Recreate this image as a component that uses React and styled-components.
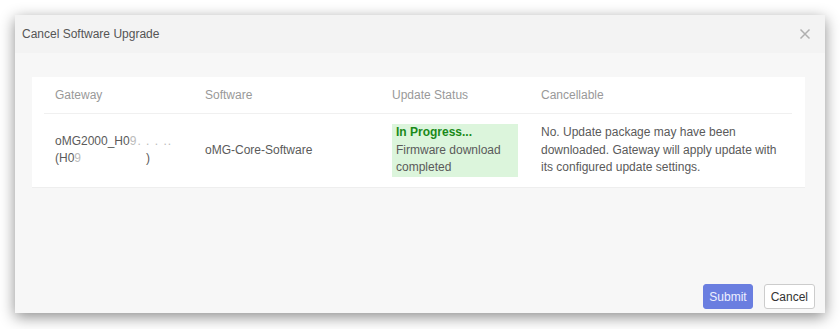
import React from 'react'
import styled, { createGlobalStyle } from 'styled-components'

const GlobalStyle = createGlobalStyle`
  body {
    margin: 0;
    background: #ffffff;
    font-family: "Liberation Sans", Arial, sans-serif;
  }
`

const Page = styled.div`
  padding: 15px;
  width: 840px;
  height: 329px;
  box-sizing: border-box;
`

const Modal = styled.div`
  width: 810px;
  height: 298px;
  background: #f7f7f7;
  box-shadow: 0 4px 14px rgba(0, 0, 0, 0.45);
  display: flex;
  flex-direction: column;
`

const Header = styled.div`
  height: 38px;
  background: #f3f3f3;
  display: flex;
  align-items: center;
  justify-content: space-between;
  padding: 0 14px 0 7px;
`

const Title = styled.div`
  font-size: 12px;
  color: #555;
`

const Close = styled.button`
  border: none;
  background: none;
  padding: 0;
  width: 12px;
  height: 12px;
  display: flex;
  cursor: pointer;
`

const Body = styled.div`
  flex: 1;
  padding: 24px 20px 0 17px;
`

const Card = styled.div`
  background: #fff;
  padding: 0 13px 0 12px;
  border-bottom: 1px solid #eee;
`

const Table = styled.table`
  width: 100%;
  border-collapse: collapse;
  font-size: 12px;
`

const Th = styled.th`
  text-align: left;
  font-weight: normal;
  color: #999;
  height: 36px;
  padding: 0 0 0 11px;
  width: ${p => p.w || 'auto'};
  border-bottom: 1px solid #f0f0f0;
  vertical-align: middle;
  box-sizing: border-box;
`

const Td = styled.td`
  color: #5a5a5a;
  padding: 10px 10px 10px 11px;
  height: 74px;
  line-height: 17.5px;
  vertical-align: middle;
  box-sizing: border-box;
`

const Masked = styled.span`
  color: #bbb;
  letter-spacing: 1px;
`

const Gap = styled.span`
  display: inline-block;
  width: 64px;
`

const Status = styled.div`
  background: #dcf5dc;
  padding: 0 4px;
  width: 126px;
  box-sizing: border-box;
`

const StatusTitle = styled.div`
  color: #1a8a1a;
  font-weight: bold;
`

const Footer = styled.div`
  display: flex;
  justify-content: flex-end;
  gap: 11px;
  padding: 0 10px 4px 0;
`

const Button = styled.button`
  font-family: "Liberation Sans", Arial, sans-serif;
  font-size: 12px;
  height: 25px;
  padding: 0 ${p => (p.primary ? '5px' : '6px')};
  border-radius: 3px;
  border: 1px solid ${p => (p.primary ? '#6a7ee0' : '#ccc')};
  background: ${p => (p.primary ? '#6a7ee0' : '#fff')};
  color: ${p => (p.primary ? '#eef0ff' : '#333')};
  cursor: pointer;
`

export default function App() {
  return (
    <>
      <GlobalStyle />
      <Page>
        <Modal>
          <Header>
            <Title>Cancel Software Upgrade</Title>
            <Close aria-label="close">
              <svg width="12" height="12" viewBox="0 0 12 12">
                <path d="M1.5 1.5 L10.5 10.5 M10.5 1.5 L1.5 10.5" stroke="#b0b0b0" strokeWidth="1.5" />
              </svg>
            </Close>
          </Header>
          <Body>
            <Card>
              <Table>
                <thead>
                  <tr>
                    <Th w="150px">Gateway</Th>
                    <Th w="187px">Software</Th>
                    <Th w="149px">Update Status</Th>
                    <Th>Cancellable</Th>
                  </tr>
                </thead>
                <tbody>
                  <tr>
                    <Td>
                      oMG2000_H0<Masked>9. . . ..</Masked>
                      <br />
                      (H0<Masked>9</Masked><Gap />)
                    </Td>
                    <Td>oMG-Core-Software</Td>
                    <Td>
                      <Status>
                        <StatusTitle>In Progress...</StatusTitle>
                        Firmware download completed
                      </Status>
                    </Td>
                    <Td>
                      No. Update package may have been downloaded. Gateway will apply update with its configured update settings.
                    </Td>
                  </tr>
                </tbody>
              </Table>
            </Card>
          </Body>
          <Footer>
            <Button primary>Submit</Button>
            <Button>Cancel</Button>
          </Footer>
        </Modal>
      </Page>
    </>
  )
}
